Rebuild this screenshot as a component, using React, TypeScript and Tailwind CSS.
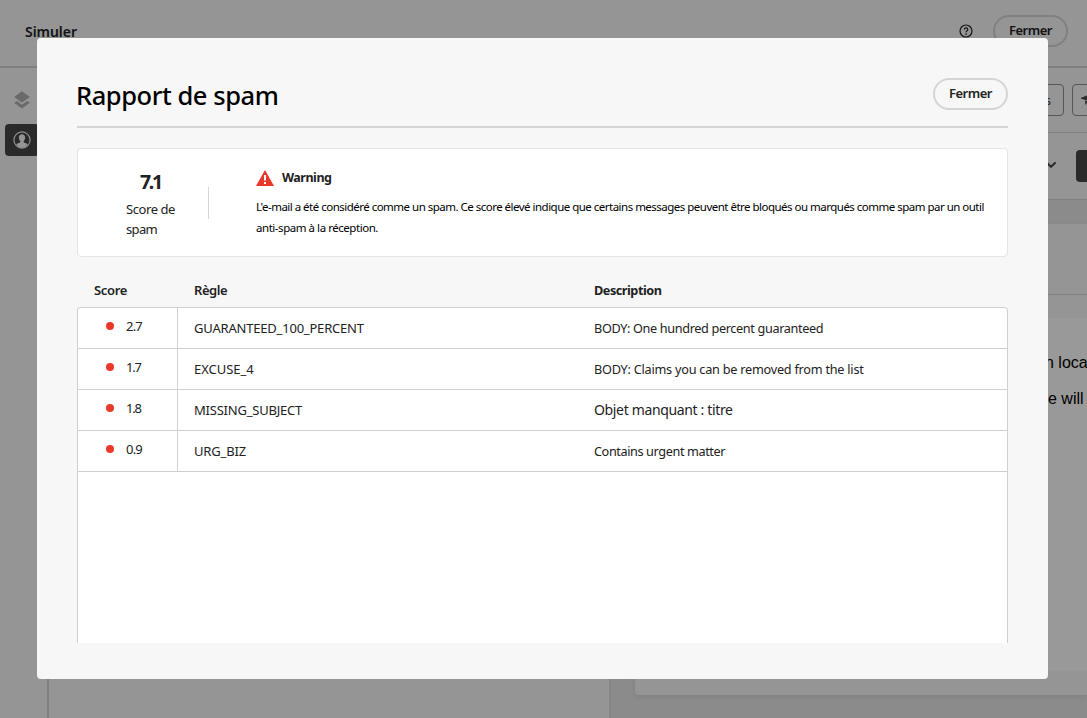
import React from "react";

type Rule = {
  score: string;
  scoreClass: string;
  name: string;
  nameClass: string;
  description: string;
  descriptionClass: string;
};

const rules: Rule[] = [
  {
    score: "2.7",
    scoreClass: "tracking-[-0.79px]",
    name: "GUARANTEED_100_PERCENT",
    nameClass: "tracking-[-0.2px]",
    description: "BODY: One hundred percent guaranteed",
    descriptionClass: "text-[12.7px] tracking-[-0.36px]",
  },
  {
    score: "1.7",
    scoreClass: "tracking-[-1.2px]",
    name: "EXCUSE_4",
    nameClass: "tracking-[-0.03px]",
    description: "BODY: Claims you can be removed from the list",
    descriptionClass: "text-[12.7px] tracking-[-0.24px]",
  },
  {
    score: "1.8",
    scoreClass: "tracking-[-1.2px]",
    name: "MISSING_SUBJECT",
    nameClass: "tracking-[-0.22px]",
    description: "Objet manquant : titre",
    descriptionClass: "text-[14px] tracking-[-0.35px]",
  },
  {
    score: "0.9",
    scoreClass: "tracking-[-0.79px]",
    name: "URG_BIZ",
    nameClass: "tracking-[-0.15px]",
    description: "Contains urgent matter",
    descriptionClass: "text-[12.7px] tracking-[-0.4px]",
  },
];

function HelpIcon() {
  return (
    <svg width="14" height="14" viewBox="0 0 14 14" fill="none" stroke="#222222">
      <circle cx="7" cy="7" r="6" strokeWidth="1.2" />
      <path d="M5.3 5.5c0-2.3 3.5-2.2 3.5-.1 0 1.3-1.7 1.3-1.7 2.8" strokeWidth="1.2" />
      <circle cx="7.1" cy="10" r="0.85" fill="#222222" stroke="none" />
    </svg>
  );
}

function LayersIcon() {
  return (
    <svg width="16" height="18" viewBox="0 0 16 18" fill="#b1b1b1">
      <path d="M8 0.2 15.9 5.9 8 11.6 0.1 5.9Z" />
      <path d="M2.8 9.9 8 13.7l5.2-3.8 2.7 1.9L8 17.6 0.1 11.8Z" />
    </svg>
  );
}

function ProfileIcon() {
  return (
    <svg width="18" height="18" viewBox="0 0 18 18">
      <circle cx="9" cy="9" r="8.1" fill="none" stroke="#f8f8f8" strokeWidth="1.1" />
      <path
        d="M9 3.3c-2 0-3.1 1.4-3.1 3.3 0 1.5.5 2.7 1.3 3.5.3.4.3 1.1-.2 1.4-1.2.7-2.9.8-3.8 2.1A8 8 0 0 0 9 17a8 8 0 0 0 5.8-3.4c-.9-1.3-2.6-1.4-3.8-2.1-.5-.3-.5-1-.2-1.4.8-.8 1.3-2 1.3-3.5 0-1.9-1.1-3.3-3.1-3.3Z"
        fill="#f8f8f8"
      />
    </svg>
  );
}

function Workspace() {
  return (
    <div className="flex h-full w-full flex-col bg-[#f8f8f8]">
      <div className="flex h-[68px] shrink-0 border-b-2 border-[#d5d5d5] pl-[25px] pr-[19px]">
        <span className="mt-[22px] text-[14px] font-semibold leading-5 tracking-[-0.04px] text-[#222222]">Simuler</span>
        <div className="ml-auto mt-6">
          <HelpIcon />
        </div>
        <div className="ml-5 mt-[15px] flex h-8 w-[75px] justify-center rounded-full border-2 border-[#d5d5d5] pt-[3px]">
          <span className="text-[13px] font-semibold leading-5 tracking-[-0.5px] text-[#222222]">Fermer</span>
        </div>
      </div>
      <div className="flex min-h-0 flex-1">
        <div className="flex w-[49px] shrink-0 flex-col border-r-2 border-[#d5d5d5] pl-[5px]">
          <div className="mt-[23px] flex h-[18px] w-[34px] justify-center">
            <LayersIcon />
          </div>
          <div className="mt-[15px] flex h-8 w-[34px] items-center justify-center rounded-[4px] bg-[#464646]">
            <ProfileIcon />
          </div>
        </div>
        <div className="w-[562px] shrink-0 border-r-2 border-[#e0e0e0]" />
        <div className="flex min-w-0 flex-1 flex-col bg-[#e8e8e8]">
          <div className="flex h-[65px] shrink-0 items-center gap-2 border-b border-[#d5d5d5] bg-[#f8f8f8] pl-[381px]">
            <div className="flex h-8 w-[72px] shrink-0 items-center justify-end rounded-[4px] border border-[#909090] pr-3">
              <span className="text-[13px] leading-5 text-[#464646]">s</span>
            </div>
            <div className="flex h-8 w-20 shrink-0 items-center rounded-[4px] border border-[#909090] pl-2">
              <svg width="18" height="14" viewBox="0 0 18 14" fill="#464646">
                <path d="M0 4.8 9 1.2V5.6L4.6 7.4 3.2 6.6 0 5.8Z" />
                <path d="M4.2 8.2 9 6.6V10L7 8.9 4.2 12Z" />
              </svg>
            </div>
          </div>
          <div className="flex h-[67px] shrink-0 items-center border-b border-[#d5d5d5] bg-[#f8f8f8] pb-[2px] pl-[435px]">
            <svg width="10" height="6" viewBox="0 0 10 6" fill="none" stroke="#464646" strokeWidth="2" className="shrink-0">
              <path d="M1 1l4 3.8L9 1" strokeLinecap="round" />
            </svg>
            <div className="ml-5 mt-[2px] h-8 w-20 shrink-0 rounded-[4px] bg-[#464646]" />
          </div>
          <div className="ml-6 mt-6 flex h-[471px] flex-col rounded-bl-[4px] bg-[#f8f8f8] shadow-[0_2px_6px_rgba(0,0,0,0.08)]">
            <div className="h-[71px] border-b border-[#d5d5d5]" />
            <div className="mt-[23px] flex h-[353px] flex-col items-start bg-white pl-[410px] pt-[35px] font-['Liberation_Sans',Arial,sans-serif] text-[16px] leading-[20px] text-black">
              <span className="whitespace-nowrap">n loca</span>
              <span className="ml-[3px] mt-4 whitespace-nowrap">e will</span>
            </div>
          </div>
        </div>
      </div>
    </div>
  );
}

function SpamReport() {
  return (
    <div className="flex h-[641px] w-[1011px] flex-col rounded-[4px] bg-[#f7f7f7] px-10 pt-10">
      <div className="flex h-[50px] shrink-0 items-start justify-between border-b-2 border-[#d5d5d5]">
        <h1 className="-ml-px text-[25.5px] font-medium leading-[34px] tracking-[-0.45px] text-black">Rapport de spam</h1>
        <button className="flex h-8 w-[75px] justify-center rounded-full border-2 border-[#d5d5d5] pt-[3px] text-[13px] font-semibold leading-5 tracking-[-0.5px] text-[#222222]">
          Fermer
        </button>
      </div>

      <div className="mt-5 flex h-[109px] shrink-0 rounded-[4px] border border-[#e4e4e4] bg-white">
        <div className="mt-[38px] flex h-8 w-[131px] shrink-0 items-center border-r border-[#d5d5d5]">
          <div className="ml-12 mt-[2px] w-[60px]">
            <div className="pl-[14px] text-[19.5px] font-bold leading-[24px] tracking-[-2.3px] text-[#222222]">7.1</div>
            <div className="mt-[5px] text-[13px] leading-5 text-[#222222]">
              <div className="tracking-[-0.42px]">Score de</div>
              <div className="tracking-[-0.67px]">spam</div>
            </div>
          </div>
        </div>
        <div className="ml-[47px] mt-[18px]">
          <div className="flex h-5 items-center gap-2">
            <svg width="18" height="16" viewBox="0 0 18 16" className="mt-0.5">
              <path d="M9 0 18 16H0Z" fill="#ea3829" />
              <path d="M8 5h2v5.5H8ZM8 12h2v2H8Z" fill="#ffffff" />
            </svg>
            <span className="pt-0.5 text-[12.5px] font-bold leading-5 tracking-[-0.48px] text-[#222222]">Warning</span>
          </div>
          <div className="mt-[9px] whitespace-nowrap text-[11.5px] leading-[21px] text-black">
            <div className="tracking-[-0.513px]">
              L'e-mail a été considéré comme un spam. Ce score élevé indique que certains messages peuvent être bloqués ou marqués comme spam par un outil
            </div>
            <div className="tracking-[-0.456px]">anti-spam à la réception.</div>
          </div>
        </div>
      </div>

      <div className="mt-[23px] flex h-[27px] shrink-0 pl-[17px] text-[13px] leading-5 text-[#222222]">
        <div className="w-[100px] font-semibold tracking-[-0.34px]">Score</div>
        <div className="w-[400px] font-semibold tracking-[-0.45px]">Règle</div>
        <div className="text-[12.7px] font-bold tracking-[-0.48px]">Description</div>
      </div>

      <div className="h-[336px] shrink-0 rounded-t-[4px] border border-b-0 border-[#d0d0d0] bg-white text-[13px] leading-5 text-[#222222]">
        {rules.map((rule) => (
          <div key={rule.name} className="flex h-[41px] items-stretch border-b border-[#d0d0d0]">
            <div className="flex w-[100px] items-center border-r border-[#d0d0d0] pb-1 pl-7">
              <span className="mb-px h-2 w-2 rounded-full bg-[#ea3829]" />
              <span className={`ml-3 ${rule.scoreClass}`}>{rule.score}</span>
            </div>
            <div className={`flex w-[400px] items-center pl-4 ${rule.nameClass}`}>{rule.name}</div>
            <div className={`flex items-center whitespace-nowrap pl-4 ${rule.descriptionClass}`}>{rule.description}</div>
          </div>
        ))}
      </div>
    </div>
  );
}

export default function App() {
  return (
    <div className="relative h-[718px] w-[1087px] overflow-hidden font-['Noto_Sans',sans-serif]">
      <Workspace />
      <div className="absolute inset-0 bg-black/40 pl-[37px] pt-[38px]">
        <SpamReport />
      </div>
    </div>
  );
}
